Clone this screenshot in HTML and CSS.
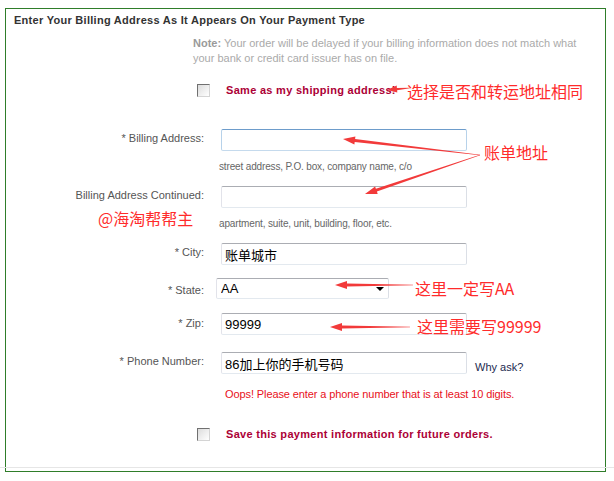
FILE: index.html
```html
<!DOCTYPE html>
<html lang="zh-CN">
<head>
    <meta charset="UTF-8">
    <meta name="viewport" content="width=device-width, initial-scale=1.0">
    <title>Billing Address</title>
    <link rel="stylesheet" href="styles.css">
</head>
<body>

    <form class="billing">
        <h3 class="billing-title">Enter Your Billing Address As It Appears On Your Payment Type</h3>
        <p class="note"><b>Note:</b> Your order will be delayed if your billing information does not match what your bank or credit card issuer has on file.</p>

        <label class="check-row">
            <input type="checkbox" class="check">
            <span>Same as my shipping address!</span>
        </label>

        <!-- Address fields -->
        <div class="field field-first">
            <label class="field-label">* Billing Address:</label>
            <div class="field-body">
                <input type="text" class="text text-focus">
                <div class="hint">street address, P.O. box, company name, c/o</div>
            </div>
        </div>

        <div class="field">
            <label class="field-label">Billing Address Continued:</label>
            <div class="field-body">
                <input type="text" class="text">
                <div class="hint">apartment, suite, unit, building, floor, etc.</div>
            </div>
        </div>

        <div class="field">
            <label class="field-label">* City:</label>
            <div class="field-body">
                <input type="text" class="text" value="账单城市">
            </div>
        </div>

        <div class="field field-state">
            <label class="field-label">* State:</label>
            <div class="field-body">
                <div class="select-wrap">
                    <select class="select">
                        <option>AA</option>
                    </select>
                </div>
            </div>
        </div>

        <div class="field field-zip">
            <label class="field-label">* Zip:</label>
            <div class="field-body">
                <input type="text" class="text" value="99999">
            </div>
        </div>

        <div class="field field-phone">
            <label class="field-label">* Phone Number:</label>
            <div class="field-body phone-body">
                <input type="text" class="text" value="86加上你的手机号码">
                <span class="why">Why ask?</span>
            </div>
        </div>

        <p class="error">Oops! Please enter a phone number that is at least 10 digits.</p>

        <label class="check-row check-save">
            <input type="checkbox" class="check">
            <span>Save this payment information for future orders.</span>
        </label>

        <div class="footer-line"></div>

        <!-- Red annotations drawn over the form -->
        <span class="mark mark-same">选择是否和转运地址相同</span>
        <span class="mark mark-bill">账单地址</span>
        <span class="mark mark-author">@海淘帮帮主</span>
        <span class="mark mark-state">这里一定写AA</span>
        <span class="mark mark-zip">这里需要写99999</span>
    </form>

    <svg class="arrows" width="614" height="481" viewBox="0 0 614 481">
        <polygon points="410,87.7 396.9,87.9 396.7,85.6 387,90 397.3,92.6 397.1,90.3 410,88.3"/>
        <polygon points="480,154.7 355.1,138.9 355.4,136.4 343,139 354.4,144.4 354.7,141.9 480,155.3"/>
        <polygon points="479.9,154.7 375.9,188.8 375.1,186.4 365,194 377.7,194 376.9,191.6 480.1,155.3"/>
        <polygon points="413,284.7 347,283.5 347,281 335,285 347,289 347,286.5 413,285.3"/>
        <polygon points="410,326.7 342,325.5 342,323 330,327 342,331 342,328.5 410,327.3"/>
    </svg>

</body>
</html>
```

FILE: styles.css
```css
/* General page */
body {
    margin: 0;
    font-family: "Liberation Sans", Arial, "Noto Sans CJK SC", sans-serif;
    color: #555;
    background-color: #ffffff;
}

/* Billing box */
.billing {
    position: relative;
    width: 599px;
    margin: 8px 0 0 5px;
    padding: 4px 0 3px;
    border: 1px solid #2f7d2a;
}

.billing-title {
    margin: 0 0 0 8px;
    font-size: 11px;
    line-height: 14px;
    font-weight: bold;
    letter-spacing: 0.28px;
    color: #333;
}

.note {
    width: 395px;
    margin: 9px 0 0 187px;
    font-size: 11px;
    line-height: 15px;
    color: #aaa;
}

.note b {
    color: #9a9a9a;
}

/* Checkbox rows */
.check-row {
    display: flex;
    align-items: center;
    gap: 16px;
    height: 20px;
    margin: 14px 0 0 191px;
    font-size: 11px;
    font-weight: bold;
    letter-spacing: 0.3px;
    color: #ac0036;
}

.check-save {
    margin-top: 23px;
}

.check {
    -webkit-appearance: none;
    appearance: none;
    width: 13px;
    height: 13px;
    margin: 0;
    border: 1px solid;
    border-color: #707070 #d4d4d4 #d4d4d4 #707070;
    background: linear-gradient(135deg, #dcdcdc, #ffffff);
}

/* Form rows */
.field {
    display: grid;
    grid-template-columns: 198px 1fr;
    column-gap: 17px;
    margin-top: 13px;
}

.field-first {
    margin-top: 29px;
}

.field-zip {
    margin-top: 14px;
}

.field-phone {
    margin-top: 17px;
}

.field-label {
    padding-top: 2px;
    text-align: right;
    font-size: 11px;
    line-height: 14px;
    color: #555;
}

.field-state .field-label {
    padding-top: 5px;
}

.field-zip .field-label {
    padding-top: 3px;
}

.text {
    display: block;
    box-sizing: border-box;
    width: 246px;
    height: 22px;
    margin: 0;
    padding: 0 3px;
    border: 1px solid;
    border-color: #abadb3 #dbdfe6 #e3e9ef #e2e3ea;
    border-radius: 2px;
    font: 13px "Liberation Sans", Arial, "Noto Sans CJK SC", sans-serif;
    color: #000;
}

.text-focus {
    border-color: #6d9ccb #b7d2ea #c5daed #b7d2ea;
}

.hint {
    margin: 9px 0 0 -2px;
    font-size: 10px;
    line-height: 13px;
    letter-spacing: -0.15px;
    color: #666;
}

/* State select */
.select-wrap {
    position: relative;
    width: 173px;
    margin-left: -5px;
}

.select {
    -webkit-appearance: none;
    appearance: none;
    display: block;
    box-sizing: border-box;
    width: 100%;
    height: 21px;
    margin: 0;
    padding: 0 0 0 4px;
    border: 1px solid;
    border-color: #abadb3 #dbdfe6 #e3e9ef #e2e3ea;
    border-radius: 2px;
    background: #fff;
    font: 13px "Liberation Sans", Arial, sans-serif;
    color: #000;
}

.select-wrap::after {
    content: "";
    position: absolute;
    right: 5px;
    top: 9px;
    border-left: 4px solid transparent;
    border-right: 4px solid transparent;
    border-top: 4px solid #000;
}

.phone-body {
    display: flex;
}

.why {
    margin: 8px 0 0 8px;
    font-size: 11px;
    line-height: 14px;
    color: #1c2a4f;
}

.error {
    margin: 13px 0 0 219px;
    font-size: 11px;
    line-height: 14px;
    letter-spacing: -0.1px;
    color: #e8101a;
}

.footer-line {
    height: 23px;
    margin: 0 -9px 0 -6px;
    border-bottom: 1px solid #e6e6e6;
}

/* Red annotations */
.mark {
    position: absolute;
    font: 16px/18px "Noto Sans CJK SC", sans-serif;
    color: #ff2b2b;
    white-space: nowrap;
}

.mark-same { left: 401px; top: 73px; }
.mark-bill { left: 478px; top: 134px; }
.mark-author { left: 92px; top: 200px; }
.mark-state { left: 409px; top: 270px; }
.mark-zip { left: 411px; top: 308px; }

.arrows {
    position: absolute;
    left: 0;
    top: 0;
    pointer-events: none;
    fill: #f23a3a;
}
```
